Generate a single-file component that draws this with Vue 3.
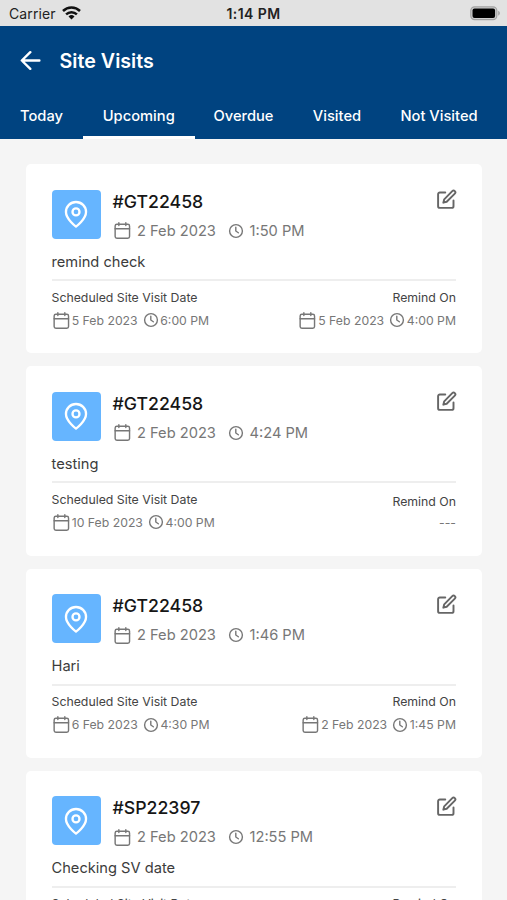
<script setup>
import { h } from 'vue'

const stroke = (size, width, children) =>
  h('svg', {
    width: size, height: size, viewBox: '0 0 24 24', fill: 'none', stroke: 'currentColor',
    'stroke-width': width, 'stroke-linecap': 'round', 'stroke-linejoin': 'round'
  }, children)

const CalendarIcon = () => stroke(19, 1.8, [
  h('rect', { x: 2.7, y: 4, width: 18.2, height: 17.8, rx: 2.2 }),
  h('path', { d: 'M2.7 9.8h18.2M7.4 2.2v3.4M16.2 2.2v3.4' })
])
const ClockIcon = () => stroke(16, 2.1, [
  h('circle', { cx: 12, cy: 12, r: 9.6 }),
  h('path', { d: 'M11.7 6.3V12l3.8 2.6' })
])
const PinIcon = () => stroke(28, 2, [
  h('path', { d: 'M20.6 10.3c0 6.1-8.6 12.5-8.6 12.5S3.4 16.4 3.4 10.3a8.6 8.6 0 0 1 17.2 0z' }),
  h('circle', { cx: 12, cy: 10.2, r: 3 })
])
const EditIcon = () => stroke(21, 2.2, [
  h('path', { d: 'M10.6 4H4.4a2 2 0 0 0-2 2v13.6a2 2 0 0 0 2 2H18a2 2 0 0 0 2-2v-6.4' }),
  h('path', { d: 'M18.6 2.4a2.05 2.05 0 0 1 2.9 2.9l-9.3 9.3-3.8 1 1-3.8z' })
])

const tabs = ['Today', 'Upcoming', 'Overdue', 'Visited', 'Not Visited']
const active = 'Upcoming'
const visits = [
  { id: '#GT22458', date: '2 Feb 2023', time: '1:50 PM', note: 'remind check', visit: ['5 Feb 2023', '6:00 PM'], remind: ['5 Feb 2023', '4:00 PM'] },
  { id: '#GT22458', date: '2 Feb 2023', time: '4:24 PM', note: 'testing', visit: ['10 Feb 2023', '4:00 PM'], remind: null },
  { id: '#GT22458', date: '2 Feb 2023', time: '1:46 PM', note: 'Hari', visit: ['6 Feb 2023', '4:30 PM'], remind: ['2 Feb 2023', '1:45 PM'] },
  { id: '#SP22397', date: '2 Feb 2023', time: '12:55 PM', note: 'Checking SV date', visit: ['6 Feb 2023', '4:30 PM'], remind: ['5 Feb 2023', '4:00 PM'] }
]
</script>

<template>
  <div class="screen">
    <div class="status">
      <div class="carrier">
        <span>Carrier</span>
        <svg width="19" height="14" viewBox="0 0 19 14" fill="none" stroke="#111" stroke-width="2.5">
          <path d="M1 5a12.2 12.2 0 0 1 17 0" />
          <path d="M4.1 8.3a7.8 7.8 0 0 1 10.8 0" />
          <path d="M9.5 13.4 6.5 10.4a4.3 4.3 0 0 1 6 0z" fill="#111" stroke="none" />
        </svg>
      </div>
      <span class="now">1:14 PM</span>
      <svg class="battery" width="31" height="15" viewBox="0 0 31 15">
        <rect x="0.8" y="0.8" width="26" height="12.8" rx="3.8" fill="#d0d0d0" stroke="#a2a2a2" stroke-width="1.2" />
        <rect x="2.5" y="2.5" width="22.6" height="9.4" rx="2" fill="#000" />
        <path d="M28.2 4.8c2.2.8 2.2 4 0 4.8z" fill="#a2a2a2" />
      </svg>
    </div>
    <header class="header">
      <div class="bar">
        <svg width="22" height="20" viewBox="0 0 22 20" fill="none" stroke="#fff" stroke-width="2.4" stroke-linecap="round" stroke-linejoin="round">
          <path d="M19.4 9.5H2M10.3 1.2 1.8 9.5l8.5 8.3" />
        </svg>
        <h1>Site Visits</h1>
      </div>
      <nav class="tabs">
        <span v-for="t in tabs" :key="t" class="tab" :class="{ on: t === active }">{{ t }}</span>
      </nav>
    </header>
    <main class="list">
      <article v-for="(v, i) in visits" :key="i" class="card">
        <div class="head">
          <div class="tile"><PinIcon /></div>
          <div class="info">
            <div class="id">{{ v.id }}</div>
            <div class="when">
              <CalendarIcon /><span class="date">{{ v.date }}</span>
              <ClockIcon /><span class="time">{{ v.time }}</span>
            </div>
          </div>
          <div class="edit"><EditIcon /></div>
        </div>
        <p class="note">{{ v.note }}</p>
        <div class="rule"></div>
        <div class="foot">
          <div class="col">
            <div class="label">Scheduled Site Visit Date</div>
            <div class="slot"><CalendarIcon /><span class="date">{{ v.visit[0] }}</span><ClockIcon /><span class="time">{{ v.visit[1] }}</span></div>
          </div>
          <div class="col right" :class="{ empty: !v.remind }">
            <div class="label">Remind On</div>
            <div v-if="v.remind" class="slot"><CalendarIcon /><span class="date">{{ v.remind[0] }}</span><ClockIcon /><span class="time">{{ v.remind[1] }}</span></div>
            <div v-else class="slot">---</div>
          </div>
        </div>
      </article>
    </main>
  </div>
</template>

<style>
body { margin: 0; overflow: hidden; }
</style>
<style scoped>
.screen { width: 507px; height: 900px; overflow: hidden; background: #f5f5f5; font-family: Inter, "Liberation Sans", sans-serif; display: flex; flex-direction: column; }
.status { flex: none; height: 25.5px; background: #e2e2e2; display: grid; grid-template-columns: 1fr auto 1fr; align-items: center; padding: 2px 6px 0 9px; box-sizing: border-box; color: #222; }
.carrier { display: flex; align-items: center; gap: 6px; font-size: 14px; letter-spacing: 0.1px; }
.carrier svg { margin-top: -2px; }
.now { font-size: 14px; font-weight: 600; letter-spacing: 0.4px; margin-right: 3px; }
.battery { justify-self: end; }
.header { flex: none; height: 113.5px; background: #004380; color: #fff; display: flex; flex-direction: column; justify-content: space-between; }
.bar { display: flex; align-items: center; gap: 17.5px; padding: 20px 0 0 20px; height: 30px; }
h1 { margin: 0; font-size: 19.7px; line-height: 28px; font-weight: 600; }
.tabs { display: flex; height: 47px; }
.tab { flex: none; box-sizing: border-box; width: 111.5px; padding-top: 3px; border-bottom: 3px solid transparent; display: flex; align-items: center; justify-content: center; font-size: 14.7px; font-weight: 500; white-space: nowrap; }
.tab:nth-child(1) { width: 83px; }
.tab:nth-child(3) { width: 98px; }
.tab:nth-child(4) { width: 89px; }
.tab:nth-child(5) { width: 115px; }
.tab.on { border-bottom-color: #fff; }
.list { display: flex; flex-direction: column; gap: 13px; padding: 25px 25.5px 0 26px; }
.card { flex: none; box-sizing: border-box; height: 189.3px; padding: 25.5px 25.5px 0; background: #fff; border-radius: 5px; }
.head { display: flex; height: 49px; }
.tile { width: 49px; height: 49px; border-radius: 4px; background: #66b5ff; color: #fff; display: flex; align-items: center; justify-content: center; }
.info { margin-left: 12px; flex: 1; }
.id { font-size: 17.7px; line-height: 24px; font-weight: 500; color: #161616; white-space: nowrap; }
.when { display: flex; align-items: center; height: 20px; margin-top: 7px; font-size: 14.65px; color: #777; white-space: nowrap; }
.when .date { width: 79px; margin: 0 11.5px 0 5.5px; }
.when .time { margin-left: 6px; }
.edit { color: #666; width: 20px; height: 21px; margin-top: -0.5px; }
svg { flex: none; display: block; }
.note { margin: 13px 0 0; font-size: 14.65px; line-height: 20px; color: #3c3c3c; }
.rule { height: 2px; margin-top: 7.5px; background: #eee; }
.foot { display: flex; justify-content: space-between; margin-top: 8.5px; }
.label { font-size: 12.3px; line-height: 16px; color: #444; white-space: nowrap; }
.slot { display: flex; align-items: center; height: 20px; margin-top: 4.5px; font-size: 12.25px; color: #777; white-space: nowrap; }
.slot .date { margin: 0 5px 0 1.2px; }
.slot .time { margin-left: 1.6px; }
.right { display: flex; flex-direction: column; align-items: flex-end; }
.empty .label { margin-top: 2px; }
.empty .slot { margin-top: 2.5px; }
</style>
